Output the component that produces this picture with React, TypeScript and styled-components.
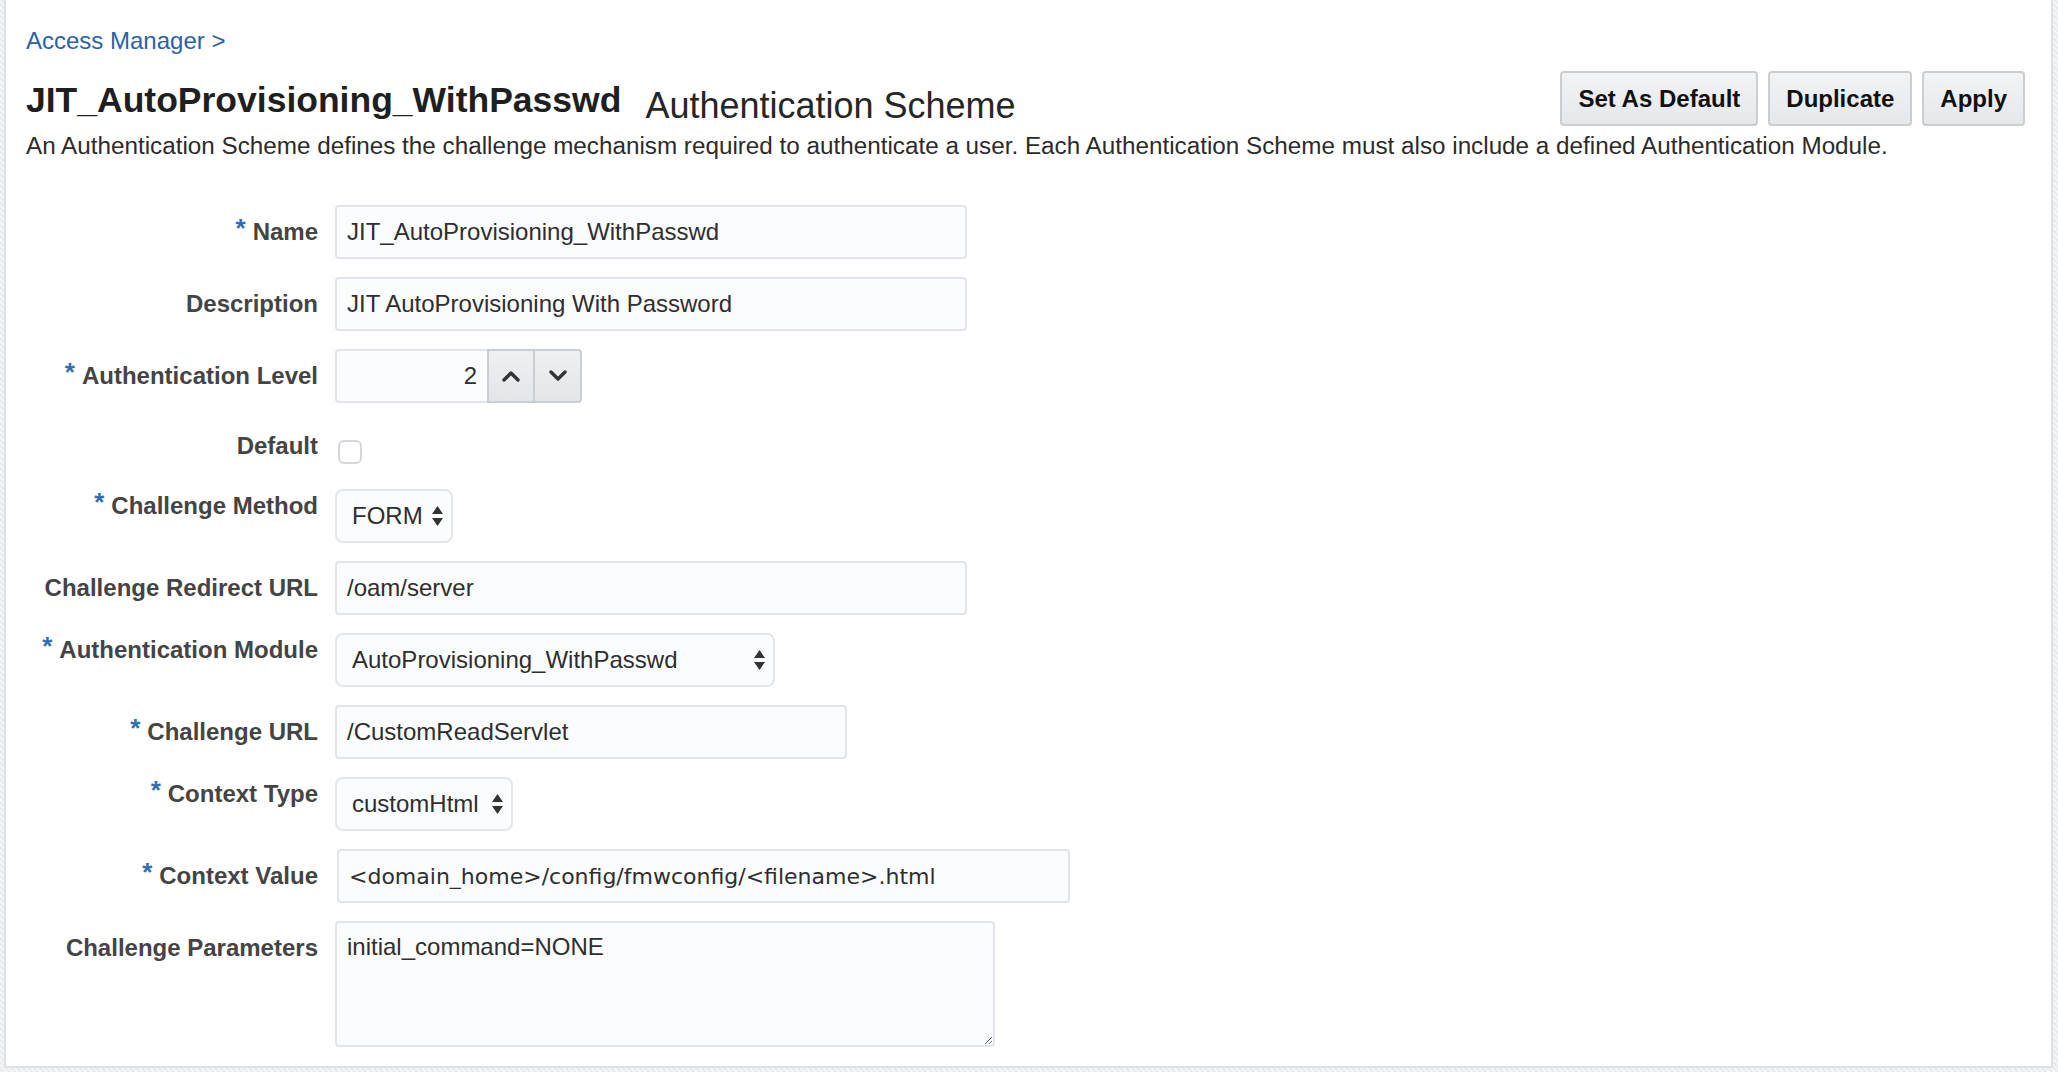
import React from 'react';
import styled, { createGlobalStyle } from 'styled-components';

const GlobalStyle = createGlobalStyle`
  html, body {
    margin: 0;
    padding: 0;
    overflow: hidden;
  }
  body {
    font-family: "Liberation Sans", Arial, sans-serif;
    background: repeating-linear-gradient(45deg, #f4f5f6 0 2px, #e9ebed 2px 4px);
  }
`;

const Page = styled.div`
  height: 1072px;
  box-sizing: border-box;
  padding: 0 5px 4px 4px;
  display: flex;
`;

const Panel = styled.div`
  flex: 1;
  background: #fff;
  border: 2px solid #dce1e5;
  border-top: none;
  padding: 27px 26px 0 20px;
  display: flex;
  flex-direction: column;
`;

const Breadcrumb = styled.a`
  color: #2a62a8;
  font-size: 24px;
  line-height: 28px;
  text-decoration: none;
`;

const HeaderRow = styled.div`
  margin-top: 16px;
  height: 55px;
  display: flex;
  align-items: center;
  justify-content: space-between;
`;

const TitleGroup = styled.div`
  display: flex;
  align-items: flex-start;
  gap: 24px;
  padding-top: 8px;
`;

const Title = styled.h1`
  margin: 0;
  font-size: 35.5px;
  line-height: 40px;
  font-weight: 700;
  color: #1f1f1f;
`;

const Subtitle = styled.span`
  padding-top: 6px;
  font-size: 36px;
  line-height: 40px;
  color: #262626;
`;

const Actions = styled.div`
  display: flex;
  gap: 10px;
`;

const Button = styled.button`
  height: 55px;
  padding: 0 16px;
  border: 2px solid #c9ced3;
  border-radius: 4px;
  background: linear-gradient(#f1f3f5, #e5e8eb);
  font-family: "Liberation Sans", Arial, sans-serif;
  font-size: 24px;
  font-weight: 700;
  color: #111;
`;

const Intro = styled.p`
  margin: 6px 0 0;
  font-size: 24.25px;
  line-height: 28px;
  color: #2b2b2b;
`;

const Form = styled.div`
  margin-top: 45px;
  display: grid;
  grid-template-columns: 292px 1fr;
  column-gap: 17px;
  row-gap: 18px;
`;

const Label = styled.label<{ $lh?: number }>`
  text-align: right;
  font-size: 24px;
  font-weight: 700;
  color: #444;
  line-height: ${p => p.$lh ?? 54}px;
  white-space: nowrap;
`;

const Req = styled.span`
  color: #2f6db5;
  font-size: 26px;
  line-height: 0;
  margin-right: 7px;
  vertical-align: 3px;
`;

const Field = styled.div`
  display: flex;
  align-items: flex-start;
`;

const TextInput = styled.input<{ $w: number; $mono?: boolean; $ml?: number }>`
  width: ${p => p.$w}px;
  height: 54px;
  box-sizing: border-box;
  margin: 0 0 0 ${p => p.$ml ?? 0}px;
  padding: 0 10px;
  border: 2px solid #e1e5e9;
  border-radius: 4px;
  background: #fbfcfd;
  font-family: ${p => (p.$mono ? '"DejaVu Sans", Verdana, sans-serif' : '"Liberation Sans", Arial, sans-serif')};
  font-size: ${p => (p.$mono ? 22 : 24)}px;
  color: #2e2e2e;
  outline: none;
`;

const Spinner = styled.div`
  display: flex;
`;

const NumberBox = styled(TextInput)`
  text-align: right;
  padding-right: 10px;
  border-radius: 4px 0 0 4px;
  border-right: none;
`;

const SpinButton = styled.button<{ $last?: boolean }>`
  width: ${p => (p.$last ? 47 : 48)}px;
  height: 54px;
  padding: 0;
  display: flex;
  align-items: center;
  justify-content: center;
  border: 2px solid #c9ced3;
  border-left-width: ${p => (p.$last ? 0 : 2)}px;
  border-radius: ${p => (p.$last ? '0 4px 4px 0' : '0')};
  background: linear-gradient(#eef0f2, #e3e6e9);
  color: #333;
`;

const Checkbox = styled.input`
  appearance: none;
  width: 24px;
  height: 24px;
  margin: 19px 0 0 3px;
  border: 2px solid #d3d7dc;
  border-radius: 6px;
  background: #fff;
`;

const SelectBox = styled.div<{ $w: number }>`
  width: ${p => p.$w}px;
  height: 54px;
  box-sizing: border-box;
  padding: 0 8px 0 15px;
  display: flex;
  align-items: center;
  justify-content: space-between;
  border: 2px solid #e3e6ea;
  border-radius: 8px;
  background: #fbfcfd;
  font-size: 24px;
  color: #2e2e2e;
`;

const TextArea = styled.textarea`
  width: 660px;
  height: 126px;
  box-sizing: border-box;
  padding: 10px 10px;
  border: 2px solid #e1e5e9;
  border-radius: 4px;
  background: #fbfcfd;
  font-family: "Liberation Sans", Arial, sans-serif;
  font-size: 24px;
  line-height: 28px;
  color: #2e2e2e;
  resize: both;
  outline: none;
`;

const Chevron = ({ up }: { up?: boolean }) => (
  <svg width="20" height="12" viewBox="0 0 20 12">
    <path
      d={up ? 'M3 10 L10 3 L17 10' : 'M3 2 L10 9 L17 2'}
      fill="none"
      stroke="currentColor"
      strokeWidth="3.4"
      strokeLinecap="round"
      strokeLinejoin="round"
    />
  </svg>
);

const SelectArrows = () => (
  <svg width="11" height="20" viewBox="0 0 11 20">
    <polygon points="5.5,0 11,8 0,8" fill="#333" />
    <polygon points="0,12 11,12 5.5,20" fill="#333" />
  </svg>
);

const Select = ({ value, width }: { value: string; width: number }) => (
  <SelectBox $w={width}>
    <span>{value}</span>
    <SelectArrows />
  </SelectBox>
);

const App: React.FC = () => {
  return (
    <>
      <GlobalStyle />
      <Page>
        <Panel>
          <div>
            <Breadcrumb href="#">Access Manager &gt;</Breadcrumb>
          </div>
          <HeaderRow>
            <TitleGroup>
              <Title>JIT_AutoProvisioning_WithPasswd</Title>
              <Subtitle>Authentication Scheme</Subtitle>
            </TitleGroup>
            <Actions>
              <Button>Set As Default</Button>
              <Button>Duplicate</Button>
              <Button>Apply</Button>
            </Actions>
          </HeaderRow>
          <Intro>
            An Authentication Scheme defines the challenge mechanism required to authenticate a user. Each
            Authentication Scheme must also include a defined Authentication Module.
          </Intro>

          <Form>
            <Label><Req>*</Req>Name</Label>
            <Field>
              <TextInput $w={632} readOnly value="JIT_AutoProvisioning_WithPasswd" />
            </Field>

            <Label>Description</Label>
            <Field>
              <TextInput $w={632} readOnly value="JIT AutoProvisioning With Password" />
            </Field>

            <Label><Req>*</Req>Authentication Level</Label>
            <Field>
              <Spinner>
                <NumberBox $w={152} readOnly value="2" />
                <SpinButton><Chevron up /></SpinButton>
                <SpinButton $last><Chevron /></SpinButton>
              </Spinner>
            </Field>

            <Label $lh={50}>Default</Label>
            <Field>
              <Checkbox type="checkbox" readOnly />
            </Field>

            <Label $lh={34}><Req>*</Req>Challenge Method</Label>
            <Field>
              <Select value="FORM" width={118} />
            </Field>

            <Label>Challenge Redirect URL</Label>
            <Field>
              <TextInput $w={632} readOnly value="/oam/server" />
            </Field>

            <Label $lh={34}><Req>*</Req>Authentication Module</Label>
            <Field>
              <Select value="AutoProvisioning_WithPasswd" width={440} />
            </Field>

            <Label><Req>*</Req>Challenge URL</Label>
            <Field>
              <TextInput $w={512} readOnly value="/CustomReadServlet" />
            </Field>

            <Label $lh={34}><Req>*</Req>Context Type</Label>
            <Field>
              <Select value="customHtml" width={178} />
            </Field>

            <Label><Req>*</Req>Context Value</Label>
            <Field>
              <TextInput $w={733} $ml={2} $mono readOnly value="<domain_home>/config/fmwconfig/<filename>.html" />
            </Field>

            <Label>Challenge Parameters</Label>
            <Field>
              <TextArea readOnly value="initial_command=NONE" />
            </Field>
          </Form>
        </Panel>
      </Page>
    </>
  );
};

export default App;
